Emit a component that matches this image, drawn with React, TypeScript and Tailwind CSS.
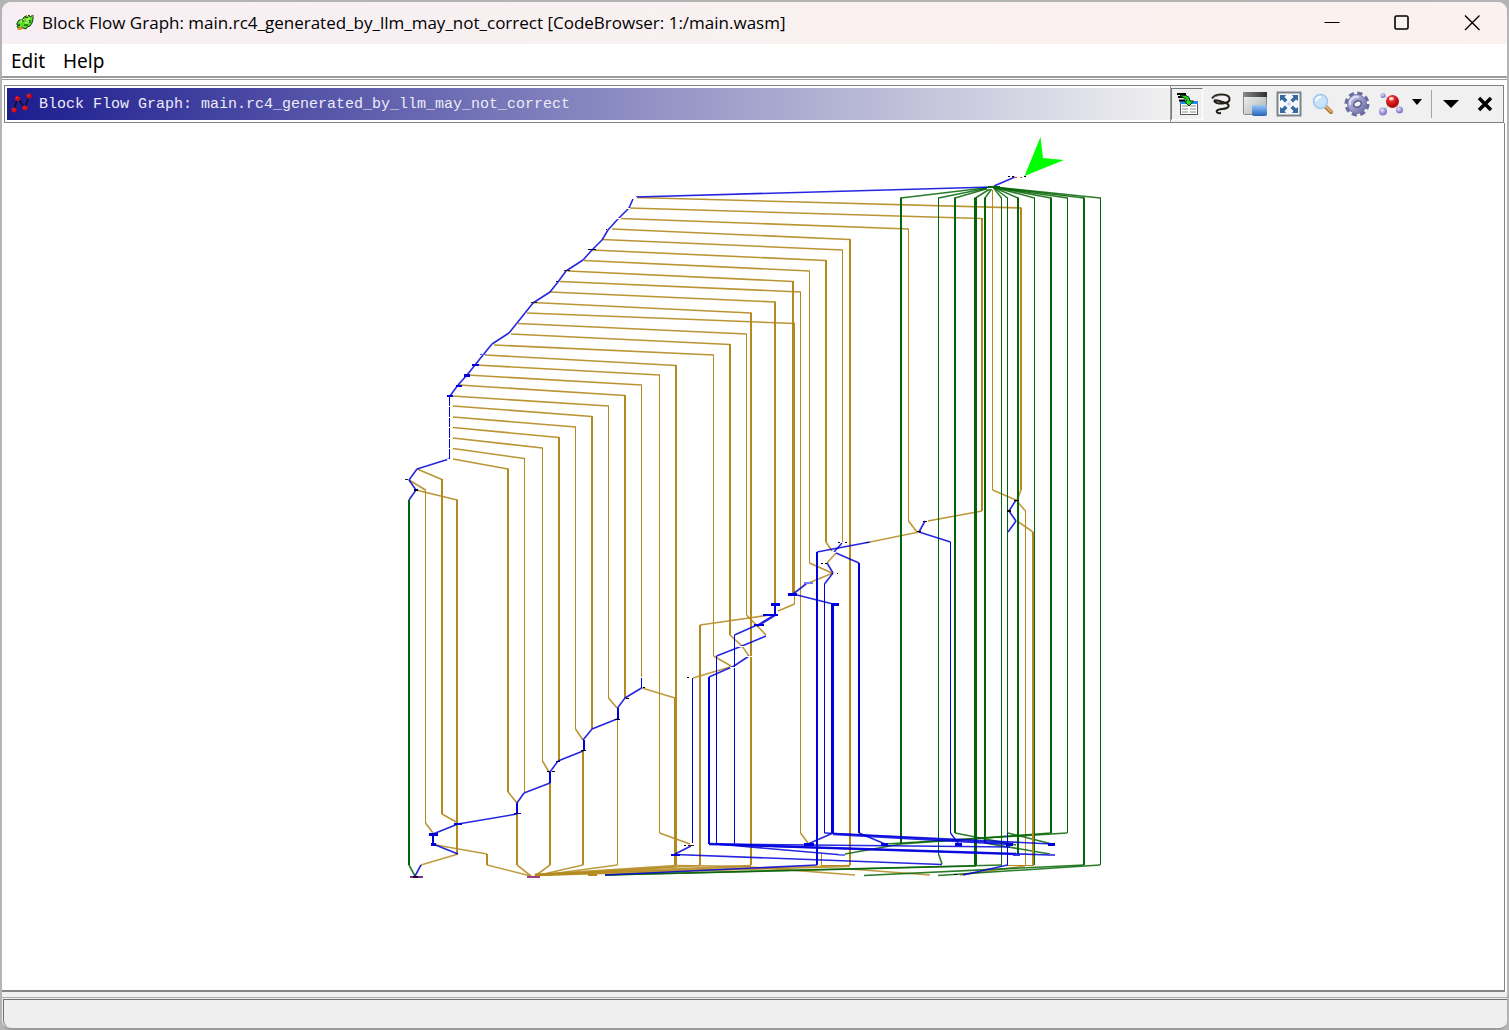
import type { ReactNode } from "react";

const GOLD = "#b48a1e";
const BLUE = "#0000dc";
const GREEN = "#056405";

// A branch leaves the staircase, runs right, drops and optionally rejoins.
// from x, from y, column x, column y, bottom y, width, join x, join y
const branches: number[][] = [
  [636, 197.5, 1021, 208, 490, 2, 1017, 500],
  [629, 208, 982, 218.5, 511, 2, 928, 521],
  [620, 218.5, 908.5, 229, 521, 1, 917, 532],
  [612, 229, 850, 239.5, 865, 2],
  [602, 239.5, 842.5, 250, 542, 1],
  [592, 250, 826, 260.5, 542, 2, 832, 551],
  [584, 260.5, 809.5, 271, 563, 1, 832, 573],
  [568, 271, 793, 281.5, 594, 2],
  [560, 281.5, 800.5, 292, 833, 1, 808, 843],
  [550, 292, 775, 302, 604, 2],
  [533, 302.5, 751, 313, 865, 2],
  [527, 313, 794.5, 323.5, 604, 1, 778, 611],
  [518, 323.5, 746.5, 334, 615, 1, 766, 635],
  [511, 334, 730, 344.5, 635, 2, 742, 646],
  [494, 345, 713.5, 355, 656, 1, 731, 666],
  [485, 355, 676, 365.5, 865, 2],
  [476, 365, 659.5, 375, 833, 1, 690, 844],
  [467, 375, 641.5, 385, 677, 1],
  [459, 385, 625, 395.5, 698, 2],
  [452, 396, 608.5, 406, 698, 1, 617, 708],
  [453, 406, 592, 416.5, 729, 2],
  [453, 417, 575.5, 427, 729, 1, 583, 740],
  [453, 427.5, 559, 437.5, 761, 2],
  [453, 438, 542.5, 448, 761, 1, 549, 772],
  [453, 448.5, 524.5, 458.5, 792, 1],
  [453, 459, 508, 469, 792, 2, 517, 803],
  [417, 469, 442, 479.5, 814, 2, 458, 823],
  [409, 480, 425.5, 490, 823, 1, 433, 833],
  [416, 490, 457, 500, 854, 2],
];

// column x, bottom y, width, for edges that fan out of the switch block
const fan: number[][] = [
  [901, 844, 2],
  [938.5, 854, 1],
  [955, 833, 2],
  [975.5, 865, 3],
  [985, 843, 2],
  [1001.5, 865, 1],
  [1007.5, 834, 1],
  [1018, 854, 2],
  [1034.5, 865, 1],
  [1051, 833, 2],
  [1067.5, 833, 1],
  [1084, 865, 2],
  [1100.5, 865, 1],
];

const gold: [number, string][] = [
  [1, "642,688 675,698"],
  [3, "675.5,698 675.5,865"],
  [1, "617.5,720 617.5,865 535,876"],
  [2, "583,751 583,865"],
  [1, "583,865 535,876"],
  [2, "550,783 550,865"],
  [1, "550,865 535,876"],
  [2, "517,814 517,865"],
  [1, "517,865 531,876"],
  [1, "436,845 487,854"],
  [2, "487,854 487,865"],
  [1, "487,865 531,876"],
  [1, "458,854 421,865"],
  [1, "992.5,190 992.5,490 1016,500 1025.5,511 1025.5,865"],
  [1, "1017,521 1033,532"],
  [2, "1033,532 1033,865"],
  [1, "919,532 870,542"],
  [1, "836,553 827,563"],
  [1, "833,573 806,584"],
  [1, "770,615 700,625"],
  [2, "700,625 700,865"],
  [1, "742,646 749,656"],
  [1, "730,667 693,678"],
  [3, "793.5,325 793.5,594"],
  [1, "821.5,854 821.5,865.5 850,865.5"],
  [1, "1007,865.5 1034,865.5"],
  [2, "535,875 676,866"],
  [2, "535,875 751,866"],
  [2, "535,875 850,866"],
  [1, "535,875.5 700,865.5"],
  [1, "676,865.5 751,866.5"],
  [1, "750,867 855,875"],
  [1, "850,869 930,875"],
  [1, "960,875 1025,866"],
];

const blue: [number, string][] = [
  [1, "633,199 629,208 617,220 608,230 602,240 592,250 583,260 566,271 558,282 550,292 533,303 525,313 517,323 509,333 492,344 483,355 475,365 467,375 458,385 450,396"],
  [1, "449.5,396 449.5,459"],
  [1, "449,459 417,469 409,480 416,490 409,500"],
  [1, "636,197 992,187"],
  [1, "994,186 1015,177"],
  [1, "641.5,678 641.5,688 625,698 617.5,708"],
  [2, "618,708 618,719"],
  [1, "617,719 592,729 583,740"],
  [2, "584,740 584,751"],
  [1, "583,751 558,761 550,772"],
  [2, "550,772 550,783"],
  [1, "550,783 524,793 517,803"],
  [2, "517,803 517,814"],
  [1, "517,814 458,824 433,834"],
  [2, "433,834 433,844"],
  [1, "433,844 458,854"],
  [1, "421,865 415,876"],
  [1, "1016,500 1009,511 1016,521 1008,532"],
  [1, "925,521 919,532 950.5,542 950.5,833 958,843"],
  [1, "870,542 817,552"],
  [2, "817,552 817,865"],
  [1, "842,543 834,552"],
  [1, "836,553 859,563"],
  [2, "859,563 859,833"],
  [1, "859,833 885,844"],
  [1, "827,563 833,573 824.5,584 824.5,833 1052,844"],
  [1, "806,584 793,594 833,604"],
  [3, "832.5,604 832.5,833"],
  [1, "833,833 808,844"],
  [2, "775,604 775,615"],
  [2, "775,615 757,626"],
  [1, "757,625 734.5,635 734.5,844"],
  [1, "766,636 742,646 716.5,656 716.5,844 843,855"],
  [1, "749,656 734,666 709,677"],
  [2, "709,677 709,844"],
  [1, "692.5,678 692.5,843"],
  [1, "691,846 675,854"],
  [1, "675,854.5 942,864.5"],
  [2, "709,844 1016,854"],
  [1, "709,844 1010,847"],
  [1, "734,845 1050,855"],
  [2, "833,834 1010,844"],
  [1, "605,875 817,865"],
  [1, "1007.5,833 1007.5,865 963,875"],
];

const green: [number, string][] = [
  [2, "409,500 409,865"],
  [1, "409,865 415,876"],
  [1, "938.5,854 942,864"],
  [1, "901,844 845,854"],
  [1, "885,844 1067,833"],
  [1, "901,844 1051,833"],
  [1, "955,833 1016,845"],
  [1, "985,843 1050,854"],
  [1, "1008,833 1052,844"],
  [1, "605,875 976,866"],
  [1, "864,875.5 1084,865"],
  [1, "938,875.5 1100,865"],
  [1, "605,875 1002,865"],
];

// Blocks seen from far away: x, y, width, height, colour
const blocks: [number, number, number, number, string][] = [
  [472, 364, 7, 2, BLUE], [464, 374, 6, 3, BLUE], [456, 385, 6, 2, BLUE], [447, 395, 6, 2, BLUE],
  [480, 354, 6, 1, "#6060ff"], [588, 249, 8, 1, "#000060"], [564, 270, 6, 1, "#223"], [531, 302, 6, 1, "#223"],
  [606, 229, 1, 1, "#000"], [556, 281, 2, 1, "#000"], [405, 479, 3, 1, "#222"], [414, 489, 4, 2, "#003"],
  [771, 603, 9, 3, BLUE], [763, 614, 15, 2, BLUE], [754, 624, 10, 2, BLUE], [788, 593, 9, 3, BLUE],
  [831, 603, 8, 3, BLUE], [804, 582, 9, 2, "#7777ff"], [804, 843, 10, 3, BLUE], [881, 843, 7, 3, BLUE],
  [955, 843, 7, 3, BLUE], [1006, 843, 7, 3, BLUE], [1048, 843, 7, 3, BLUE], [1048, 854, 7, 2, "#5555ee"],
  [1013, 854, 7, 2, "#3333ee"], [839, 854, 6, 2, "#7777ff"], [671, 854, 9, 2, BLUE], [454, 823, 8, 2, BLUE],
  [429, 833, 9, 3, BLUE], [431, 843, 5, 3, BLUE], [410, 876, 13, 2, "#7a2a8a"], [413, 876, 5, 2, "#200028"],
  [527, 876, 13, 2, "#a04080"], [514, 813, 7, 1, "#0000a0"], [547, 771, 3, 1, "#000"], [552, 771, 3, 1, "#000"],
  [556, 761, 4, 1, "#003"], [581, 750, 5, 1, "#000"], [615, 719, 5, 1, "#000"], [626, 698, 3, 1, "#000"],
  [643, 687, 2, 1, "#000"], [923, 521, 4, 1, "#003"], [917, 531, 4, 1, "#000"], [1014, 500, 5, 1, "#000"],
  [1007, 510, 4, 2, "#000"], [838, 542, 2, 1, "#000"], [845, 542, 2, 1, "#000"], [866, 542, 2, 1, "#000"],
  [821, 563, 2, 1, "#000"], [825, 563, 2, 1, "#000"], [837, 573, 1, 1, "#000"], [687, 677, 2, 1, "#000"],
  [684, 845, 2, 1, "#000"], [688, 845, 6, 1, "#501030"], [1008, 176, 2, 1, "#000"], [1012, 176, 2, 1, "#000"],
  [1014, 177, 3, 1, "#c05030"], [1020, 177, 2, 1, "#c05030"], [1024, 176, 2, 1, "#000"], [988, 186, 12, 2, GREEN],
  [588, 874, 9, 2, GOLD], [954, 874, 3, 1, "#003"],
];

// Blocks too light to register, which only interrupt the edges
const gaps: number[][] = [
  [990, 188], [634, 197], [627, 208], [618, 218], [450, 406], [450, 417], [450, 427],
  [450, 438], [450, 448], [450, 459], [833, 552], [741, 646], [749, 656], [733, 667],
];

// Upright runs stay crisp; slanted runs are drawn a little heavier and lighter in tone.
function Edge({ points, color, width }: { points: string; color: string; width: number }) {
  const pts = points.split(" ").map((p) => p.split(",").map(Number));
  return (
    <g stroke={color}>
      {pts.slice(1).map(([x2, y2], i) => {
        const [x1, y1] = pts[i];
        const slanted = x1 !== x2 && y1 !== y2;
        return <line key={i} x1={x1} y1={y1} x2={x2} y2={y2} strokeWidth={slanted ? width + 0.6 : width} strokeOpacity={slanted ? 0.85 : 1} />;
      })}
    </g>
  );
}

function BlockGraph() {
  return (
    <svg
      role="img"
      aria-label="Block flow graph"
      className="h-[760px] w-[710px] shrink-0"
      viewBox="398 123 710 760"
      fill="none"
    >
      {branches.map(([x, y, cx, cy, by, w, jx, jy], i) => (
        <g key={i} stroke={GOLD}>
          <path d={`M${x} ${y}L${cx} ${cy}`} strokeWidth={1.6} strokeOpacity={0.9} />
          <path d={`M${cx} ${cy - 0.5}V${by}`} strokeWidth={w} />
          {jx !== undefined && <path d={`M${cx} ${by}L${jx} ${jy}`} strokeWidth={1.6} strokeOpacity={0.9} />}
        </g>
      ))}
      {gold.map(([w, p], i) => (
        <Edge key={i} points={p} color={GOLD} width={w} />
      ))}
      {fan.map(([x, b, w], i) => (
        <g key={i} stroke={GREEN}>
          <path d={`M993 187L${x} 198`} strokeWidth={1.5} strokeOpacity={0.85} />
          <path d={`M${x} 197.500V${b}`} strokeWidth={w} />
        </g>
      ))}
      {green.map(([w, p], i) => (
        <Edge key={i} points={p} color={GREEN} width={w} />
      ))}
      <path d="M1033 532V865" stroke={GOLD} strokeWidth={2} />
      {blue.map(([w, p], i) => (
        <Edge key={i} points={p} color={BLUE} width={w} />
      ))}
      {gaps.map(([x, y], i) => (
        <rect key={i} x={x - 3} y={y} width={6} height={1} fill="#fff" />
      ))}
      {blocks.map(([x, y, w, h, c], i) => (
        <rect key={i} x={x} y={y} width={w} height={h} fill={c} />
      ))}
      <path d="M1024.500 176L1040.500 137L1043 158L1064 160Z" fill="#00ff00" />
    </svg>
  );
}

function Dragon() {
  return (
    <svg className="size-[18px]" viewBox="0 0 18 18" aria-hidden="true">
      <path d="M1 9L3 6H6L8 3L10 2V4L13 1L14 3L17 1V5L16 9L14 12L11 13L10 15L7 14H2L1 12L4 11L1 11Z" fill="#56d92c" stroke="#123f10" />
      <path d="M4 8L8 6M10 6L14 4M9 9L13 8" stroke="#a6f05a" strokeWidth="2" />
      <path d="M6 7H8M11 4L12 3M8 11H12M14 6V9" stroke="#0c300c" />
      <path d="M1 15L4 13L7 14L5 16H2Z" fill="#f08a24" />
      <path d="M10 1L12 3M16 1L17 3" stroke="#e07a20" />
    </svg>
  );
}

function GraphIcon() {
  return (
    <svg className="size-[22px]" viewBox="0 0 22 22" aria-hidden="true">
      <path d="M3 17L6.500 5L14 15L18 3" stroke="#10102c" strokeWidth="1.500" fill="none" />
      {[[3, 17], [6.5, 5.5], [14, 15], [18, 3]].map(([x, y]) => (
        <g key={x}>
          <circle cx={x} cy={y} r="2.500" fill="#d40d16" />
          <circle cx={x - 1} cy={y - 1} r="0.600" fill="#ff5a50" />
        </g>
      ))}
    </svg>
  );
}

function SnapIcon() {
  return (
    <svg className="size-6" viewBox="0 0 24 24" aria-hidden="true">
      <rect x="5.500" y="9.500" width="17" height="13" fill="#fff" stroke="#55585c" />
      <path d="M5 10.500H23" stroke="#2b8cf0" strokeWidth="3" />
      <path d="M7 14H13M15 14H21M7 17H13M15 17H21M7 20H13M15 20H21" stroke="#c4c4c4" strokeWidth="2" />
      <path d="M2 2H11M3 5H10M4 8.500H10" stroke="#000" strokeWidth="2" />
      <path d="M5 3L11 3.500Q15 4.500 15 9H18.500L14 14L9 9H12Q11.500 6.500 8 5.500Z" fill="#22dc22" stroke="#042e04" />
    </svg>
  );
}

function LassoIcon() {
  return (
    <svg className="size-6" viewBox="0 0 24 24" fill="none" stroke="#222018" aria-hidden="true">
      <path d="M3 6.500C5 3.500 8 2.500 13 2.500C18 2.500 21 4.500 20.500 7.500C20 11 13 12.500 8 11C4 9.500 5 7.500 8.500 8.500C14 10.500 20.500 11 19.500 14.500C18 18 10 16 8 18.500C7 20.500 9 21.500 12 21" strokeWidth="2" />
      <path d="M4 6C6 4 10 3.500 13 3.500" stroke="#938d78" strokeWidth="0.700" />
    </svg>
  );
}

function WindowIcon() {
  return (
    <svg className="size-[26px]" viewBox="0 0 26 26" aria-hidden="true">
      <defs>
        <linearGradient id="winTop"><stop stopColor="#8a8a8a" /><stop offset="1" stopColor="#303030" /></linearGradient>
        <linearGradient id="winBody" x2="1" y2="1"><stop stopColor="#f4f4f4" /><stop offset="1" stopColor="#aab2ae" /></linearGradient>
        <linearGradient id="winBlue" x2="0" y2="1"><stop stopColor="#9cc8f5" /><stop offset="0.500" stopColor="#5c97dc" /><stop offset="1" stopColor="#2865b5" /></linearGradient>
      </defs>
      <rect x="1.500" y="1.500" width="23" height="22" rx="1" fill="url(#winBody)" stroke="#85898b" />
      <rect x="1" y="1" width="24" height="5" fill="url(#winTop)" />
      <rect x="10" y="14" width="15" height="11" rx="2" fill="url(#winBlue)" />
    </svg>
  );
}

function FitIcon() {
  return (
    <svg className="size-[26px]" viewBox="0 0 26 26" aria-hidden="true">
      <rect x="1.500" y="1.500" width="23" height="23" fill="#f6faff" stroke="#7f8387" strokeWidth="2" />
      <path d="M4 4H10L8.500 6L11.500 9L9 11.500L6 8.500L4 10ZM22 4V10L20 8.500L17 11.500L14.500 9L17.500 6L16 4ZM4 22V16L6 17.500L9 14.500L11.500 17L8.500 20L10 22ZM22 22H16L17.500 20L14.500 17L17 14.500L20 17.500L22 16Z" fill="#35699f" />
      <rect x="11.500" y="11.500" width="3" height="3" fill="#bcd5ed" />
    </svg>
  );
}

function ZoomIcon() {
  return (
    <svg className="size-[22px]" viewBox="0 0 22 22" aria-hidden="true">
      <path d="M14 14L19 19" stroke="#a87434" strokeWidth="4" strokeLinecap="round" />
      <path d="M14 13.500L19 18.500" stroke="#e5b070" strokeWidth="2" strokeLinecap="round" />
      <circle cx="8.500" cy="8.500" r="7" fill="#c8e3fa" stroke="#a1c7ee" strokeWidth="1.500" />
      <path d="M4 8Q5 4 9 4" stroke="#fff" strokeWidth="2" fill="none" />
    </svg>
  );
}

function GearIcon() {
  return (
    <svg className="size-[26px]" viewBox="0 0 26 26" aria-hidden="true">
      <defs>
        <linearGradient id="gear" x2="1" y2="1"><stop stopColor="#c9cbea" /><stop offset="0.550" stopColor="#9497c6" /><stop offset="1" stopColor="#62659a" /></linearGradient>
      </defs>
      <circle cx="13" cy="13" r="10.500" fill="none" stroke="#6a6d9f" strokeWidth="4" strokeDasharray="5 3.247" />
      <circle cx="13" cy="13" r="9.500" fill="url(#gear)" stroke="#7477a5" />
      <path d="M6 14A7 7 0 0 1 15 6" fill="none" stroke="#dddff5" strokeWidth="2" />
      <ellipse cx="13.500" cy="13" rx="4" ry="3" transform="rotate(-25 13.500 13)" fill="#f0f0f0" stroke="#555883" strokeWidth="1.500" />
    </svg>
  );
}

function LayoutIcon() {
  return (
    <svg className="size-[26px]" viewBox="0 0 26 26" aria-hidden="true">
      <defs>
        <radialGradient id="redBall" cx="0.400" cy="0.300"><stop stopColor="#ffc6c6" /><stop offset="0.400" stopColor="#ee3030" /><stop offset="1" stopColor="#b60d10" /></radialGradient>
        <radialGradient id="violetBall" cx="0.400" cy="0.350"><stop stopColor="#e6e4ff" /><stop offset="1" stopColor="#8580cd" /></radialGradient>
      </defs>
      <path d="M5 4L14 10L5 21M14 10L22 19" stroke="#ccc" fill="none" />
      <circle cx="5" cy="4.500" r="2.500" fill="url(#violetBall)" />
      <circle cx="5" cy="20.500" r="4" fill="url(#violetBall)" />
      <circle cx="21.500" cy="19" r="3.500" fill="url(#violetBall)" />
      <circle cx="14.500" cy="10.500" r="6.500" fill="url(#redBall)" />
      <ellipse cx="13.500" cy="7.500" rx="2.500" ry="1.500" fill="#fff" opacity="0.700" />
    </svg>
  );
}

function Caret({ big = false }: { big?: boolean }) {
  return (
    <svg className={big ? "h-2 w-4" : "h-[6px] w-[10px]"} viewBox="0 0 16 8" preserveAspectRatio="none" aria-hidden="true">
      <path d="M0 0H16L8 8Z" fill="#000" />
    </svg>
  );
}

function Tool({ label, children, pressed = false }: { label: string; children: ReactNode; pressed?: boolean }) {
  return (
    <button
      type="button"
      aria-label={label}
      aria-pressed={pressed}
      className={
        pressed
          ? "flex h-8 w-8 items-center justify-center border border-t-[#777] border-r-white border-b-white border-l-[#777]"
          : "flex h-8 w-8 items-center justify-center"
      }
    >
      {children}
    </button>
  );
}

export default function App() {
  return (
    <div className="h-screen bg-[#b4b4b4] px-[2px] pt-[2px] font-['Noto_Sans',sans-serif] text-black">
      <div className="flex h-full flex-col overflow-hidden rounded-[9px] border-b-2 border-[#9b9b9b] bg-[#f0f0f0]">
        <header className="flex h-[42px] shrink-0 items-center bg-linear-to-r from-[#f7eff3] to-[#fbf1ee] pl-[14px]">
          <Dragon />
          <h1 className="ml-2 flex-1 truncate font-['Open_Sans','Noto_Sans',sans-serif] text-[17px]">
            Block Flow Graph: main.rc4_generated_by_llm_may_not_correct [CodeBrowser: 1:/main.wasm]
          </h1>
          <div className="flex">
            <button type="button" aria-label="Minimize" className="flex h-10 w-[70px] items-center justify-center">
              <svg className="size-4" viewBox="0 0 16 16"><path d="M0.500 7.500H15.500" stroke="#000" /></svg>
            </button>
            <button type="button" aria-label="Maximize" className="flex h-10 w-[70px] items-center justify-center">
              <svg className="size-4" viewBox="0 0 16 16"><rect x="1" y="1" width="13" height="13" rx="1.500" fill="none" stroke="#000" strokeWidth="1.600" /></svg>
            </button>
            <button type="button" aria-label="Close window" className="flex h-10 w-[70px] items-center justify-center">
              <svg className="size-4" viewBox="0 0 16 16"><path d="M1 0.500L15.500 15M15.500 0.500L1 15" stroke="#000" strokeWidth="1.400" /></svg>
            </button>
          </div>
        </header>

        <nav className="flex h-8 shrink-0 items-center gap-[18px] bg-white pt-px pl-[9px] text-[19px] leading-8">
          <button type="button">Edit</button>
          <button type="button">Help</button>
        </nav>
        <div className="h-1 shrink-0 border-t-2 border-b border-[#999c99] bg-white" />

        <main className="flex min-h-0 flex-1 flex-col bg-white pt-[5px]">
          <div className="mr-[3px] ml-[2px] flex h-[38px] shrink-0 border border-[#808080] bg-[#f0f0f0]">
            <div className="flex flex-1 items-center overflow-hidden border-2 border-r-0 border-white bg-linear-to-r/srgb from-[#1c1c8f] to-[#f0f0f0] bg-origin-border pl-1">
              <GraphIcon />
              <h2 className="ml-[6px] pt-[2px] font-['Liberation_Mono',monospace] text-[15px] whitespace-nowrap text-[#ececf8]">
                Block Flow Graph: main.rc4_generated_by_llm_may_not_correct
              </h2>
            </div>
            <div className="flex items-center border-l border-[#999] pr-[2px]">
              <div className="flex items-center gap-[2px]">
                <Tool label="Block hover mode" pressed><SnapIcon /></Tool>
                <Tool label="Select vertices"><LassoIcon /></Tool>
                <Tool label="Satellite view"><WindowIcon /></Tool>
                <Tool label="Fit graph"><FitIcon /></Tool>
                <Tool label="Zoom"><ZoomIcon /></Tool>
                <Tool label="Settings"><GearIcon /></Tool>
                <Tool label="Arrangement"><LayoutIcon /></Tool>
              </div>
              <button type="button" aria-label="Choose arrangement" className="mr-1 ml-[5px] flex h-8 w-[10px] items-center justify-center pb-1"><Caret /></button>
              <span className="ml-[5px] h-7 w-px bg-[#a5a5a5]" />
              <button type="button" aria-label="Panel menu" className="flex h-8 w-[37px] items-center justify-center"><Caret big /></button>
              <button type="button" aria-label="Close panel" className="flex h-8 w-8 items-center justify-center">
                <svg className="size-4" viewBox="0 0 16 16"><path d="M2 2L14 14M14 2L2 14" stroke="#000" strokeWidth="3.500" /></svg>
              </button>
            </div>
          </div>
          <section className="mr-[2px] flex min-h-0 flex-1 justify-center overflow-hidden border-r border-b-2 border-[#858585] bg-white">
            <BlockGraph />
          </section>
        </main>

        <footer className="mt-[5px] shrink-0 border-t border-[#aaa]">
          <div className="mt-px ml-px h-[29px] rounded-bl-[8px] border-t border-l border-[#707070] bg-[#efefef]" />
        </footer>
      </div>
    </div>
  );
}
